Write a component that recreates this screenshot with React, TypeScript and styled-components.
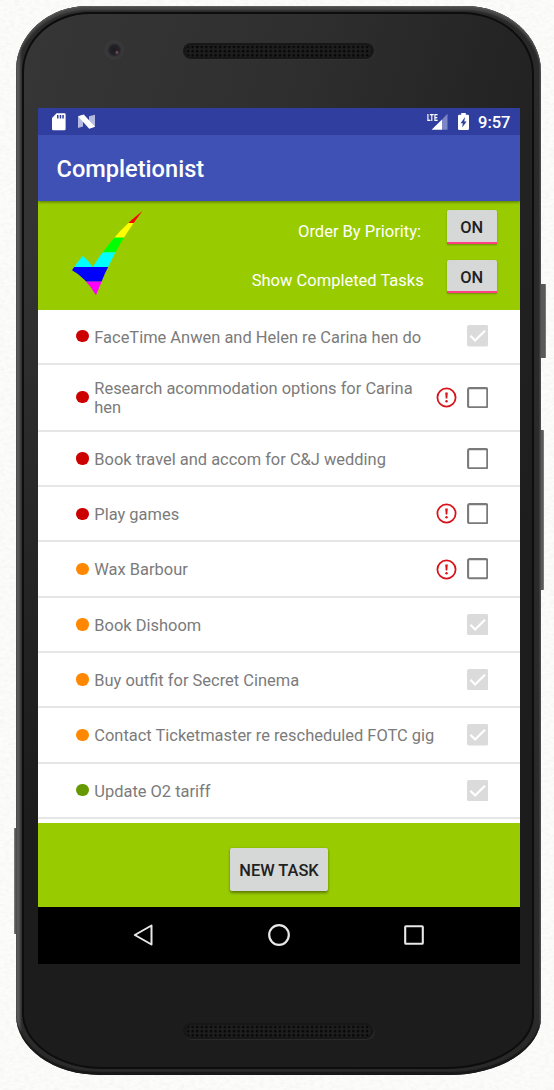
import React from 'react';
import styled, { createGlobalStyle } from 'styled-components';

const GlobalStyle = createGlobalStyle`
  * { box-sizing: border-box; }
  html, body { margin: 0; padding: 0; }
  body {
    background: #fcfcfb;
    font-family: Roboto, sans-serif;
    overflow: hidden;
  }
`;

const Desk = styled.div`
  position: relative;
  width: 554px;
  height: 1090px;
  padding: 6px 0 0 16px;
  overflow: hidden;
`;

const PaperGrain = styled.svg`
  position: absolute;
  inset: 0;
  width: 100%;
  height: 100%;
`;

const Phone = styled.div`
  position: relative;
  width: 525px;
  height: 1069px;
`;

const SideButton = styled.div<{ $side: 'left' | 'right'; $top: number; $height: number; $depth: number }>`
  position: absolute;
  ${(p) => p.$side}: ${(p) => -p.$depth}px;
  top: ${(p) => p.$top}px;
  width: 12px;
  height: ${(p) => p.$height}px;
  border-radius: 1px;
  background: #59585a;
  border-${(p) => p.$side}: 1px solid #777678;
`;

const Shell = styled.div`
  position: relative;
  height: 100%;
  padding: 6px 7px 6px 6px;
  border-radius: 72px 76px 92px 84px / 64px 66px 58px 60px;
  background: linear-gradient(90deg, #48494a 0, #5e5f60 1px, #515253 3px, #2b2b2b 6px, #292929 519px, #2d2c2d 523px, #5f5c5f 525px);
  box-shadow: inset 0 1px 1px #5c5c5c, inset 0 4px 2px #484848, inset 0 -3px 1px #181818;
`;

const Face = styled.div`
  height: 100%;
  display: flex;
  flex-direction: column;
  align-items: flex-start;
  padding: 0 12px 0 14px;
  border: 2px solid #0d0d0d;
  border-radius: 68px 72px 88px 80px / 60px 62px 54px 56px;
  background:
    linear-gradient(180deg, transparent 0, transparent 200px, #1c1c1d 800px),
    linear-gradient(105deg, #363637 0, #2f2f30 35%, #232323 65%, #1b1b1b 100%);
`;

const Bezel = styled.div<{ $height: number; $offset: number }>`
  width: 482px;
  height: ${(p) => p.$height}px;
  flex: none;
  display: flex;
  align-items: flex-start;
  padding-top: ${(p) => p.$offset}px;
`;

const Camera = styled.div`
  width: 20px;
  height: 20px;
  margin: -3px 0 0 66px;
  border-radius: 50%;
  background: radial-gradient(circle at 13px 12.5px, #8a625c 0, #39303a 1.6px, transparent 2.6px),
    radial-gradient(circle at 10.5px 10px, #1c1b20 0, #242228 5px, #343335 6.5px, #3a3a3b 9px, #373738 10px);
`;

const Speaker = styled.div<{ $left: number }>`
  width: 191px;
  height: 16px;
  margin-left: ${(p) => p.$left}px;
  padding: 2px 3px;
  border-radius: 8px;
  background: #171717;
  box-shadow: 0.5px 0.5px 0 #393939;
`;

const Mesh = styled.div`
  height: 12px;
  border-radius: 6px;
  background: radial-gradient(circle at 2px 2px, #050505 0, #080808 0.9px, #1e1e1e 1.7px) 0 0 / 4.6px 4.2px;
`;

const Screen = styled.div`
  width: 482px;
  height: 856px;
  flex: none;
  display: flex;
  flex-direction: column;
  background: #fff;
`;

const StatusBar = styled.div`
  height: 27px;
  flex: none;
  display: flex;
  align-items: center;
  padding: 0 10px 0 13px;
  background: #303f9f;
`;

const StatusGlyph = styled.svg<{ $gap: number }>`
  flex: none;
  margin-right: ${(p) => p.$gap}px;
`;

const Spacer = styled.div`
  flex: 1;
`;

const LteBadge = styled.span`
  width: 11px;
  height: 18px;
  margin-right: -8px;
  color: #fff;
  font-size: 9.6px;
  font-weight: 800;
  line-height: 9px;
  transform: scaleX(0.68);
  transform-origin: left;
  z-index: 1;
`;

const Clock = styled.span`
  width: 32px;
  color: #fff;
  font-size: 16.5px;
  font-weight: 500;
  line-height: 27px;
  padding-top: 1px;
  white-space: nowrap;
`;

const AppBar = styled.header`
  position: relative;
  height: 66px;
  flex: none;
  padding-left: 18.5px;
  background: #3f51b5;
  box-shadow: 0 1px 3px rgba(0, 0, 0, 0.45);
  clip-path: inset(0 0 -6px 0);
`;

const Title = styled.h1`
  margin: 0;
  padding-top: 1px;
  color: #fff;
  font-size: 23.6px;
  font-weight: 500;
  line-height: 66px;
`;

const Filters = styled.section`
  height: 108.5px;
  flex: none;
  display: flex;
  justify-content: space-between;
  padding: 9px 23.5px 0 30px;
  background: #99cc00;
`;

const Logo = styled.svg`
  margin: -5px 0 0 -8px;
`;

const Controls = styled.div`
  display: flex;
  flex-direction: column;
  gap: 16.3px;
`;

const Control = styled.div<{ $gap: number }>`
  height: 33.6px;
  display: flex;
  justify-content: flex-end;
  gap: ${(p) => p.$gap}px;
`;

const ControlLabel = styled.span<{ $drop: number }>`
  padding-top: ${(p) => p.$drop}px;
  color: #fff;
  font-size: 16.5px;
  line-height: 20px;
  white-space: nowrap;
`;

const Toggle = styled.button`
  width: 49.5px;
  height: 33.6px;
  padding: 2px 0 0;
  border: 0;
  border-bottom: 2px solid #ff4081;
  border-radius: 2px 2px 0 0;
  background: #d6d7d7;
  box-shadow: 0 1px 2px rgba(0, 0, 0, 0.3);
  color: #212121;
  font: 500 16.4px/32px Roboto, sans-serif;
`;

const TaskList = styled.ul`
  height: 513.5px;
  flex: none;
  margin: 0;
  padding: 0;
  overflow: hidden;
  list-style: none;
`;

const TaskRow = styled.li<{ $tall?: boolean }>`
  height: ${(p) => (p.$tall ? 67 : 55.3)}px;
  display: flex;
  align-items: center;
  padding: 0 31.8px 0 38.3px;
  border-bottom: 2px solid #e6e6e6;
`;

const Dot = styled.span<{ $color: string }>`
  width: 12.4px;
  height: 12.4px;
  flex: none;
  border-radius: 50%;
  background: ${(p) => p.$color};
`;

const TaskName = styled.span`
  flex: 1;
  padding: 2px 0 0 5.6px;
  color: #7b7b7b;
  font-size: 16.45px;
  line-height: 19.3px;
`;

const RowIcon = styled.svg<{ $gap?: number }>`
  flex: none;
  margin-right: ${(p) => p.$gap ?? 0}px;
`;

const Footer = styled.footer`
  height: 84px;
  flex: none;
  display: flex;
  justify-content: center;
  align-items: flex-start;
  padding-top: 25px;
  background: #99cc00;
`;

const NewTask = styled.button`
  width: 98.6px;
  height: 43px;
  padding: 1px 0 0;
  border: 0;
  border-radius: 2px;
  background: #d6d7d7;
  box-shadow: 0 1.5px 3px rgba(0, 0, 0, 0.4);
  color: #212121;
  font: 500 16.4px/44px Roboto, sans-serif;
  white-space: nowrap;
`;

const NavBar = styled.nav`
  height: 57px;
  flex: none;
  display: flex;
  align-items: center;
  gap: 111.5px;
  padding: 0 0 2px 93px;
  background: #000;
`;

type Task = { name: string; color: string; done?: boolean; overdue?: boolean; tall?: boolean };

const RED = '#cc0000';
const ORANGE = '#ff8800';
const GREEN = '#669900';

const tasks: Task[] = [
  { name: 'FaceTime Anwen and Helen re Carina hen do', color: RED, done: true },
  { name: 'Research acommodation options for Carina hen', color: RED, overdue: true, tall: true },
  { name: 'Book travel and accom for C&J wedding', color: RED },
  { name: 'Play games', color: RED, overdue: true },
  { name: 'Wax Barbour', color: ORANGE, overdue: true },
  { name: 'Book Dishoom', color: ORANGE, done: true },
  { name: 'Buy outfit for Secret Cinema', color: ORANGE, done: true },
  { name: 'Contact Ticketmaster re rescheduled FOTC gig', color: ORANGE, done: true },
  { name: 'Update O2 tariff', color: GREEN, done: true },
];

const Alert = () => (
  <RowIcon $gap={9.7} width="21" height="21" viewBox="0 0 21 21">
    <circle cx="10.5" cy="10.5" r="9.1" fill="none" stroke="#d8141b" strokeWidth="1.8" />
    <path d="M9.2 5.4h2.6l-.5 6.2H9.7z" fill="#d8141b" />
    <circle cx="10.5" cy="14.3" r="1.2" fill="#d8141b" />
  </RowIcon>
);

const Checkbox = ({ checked }: { checked?: boolean }) => (
  <RowIcon width="21.4" height="21.4" viewBox="0 0 21.4 21.4">
    {checked ? (
      <>
        <rect width="21.4" height="21.4" rx="2.2" fill="#dbdbdb" />
        <path d="M3.4 10.8l4.7 4.7L18 5.8" fill="none" stroke="#fff" strokeWidth="2.3" />
      </>
    ) : (
      <rect x="1.1" y="1.1" width="19.2" height="19.2" rx="1.4" fill="none" stroke="#7a7a7a" strokeWidth="2.1" />
    )}
  </RowIcon>
);

const RainbowCheck = () => (
  <Logo width="90" height="100" viewBox="0 0 270 300">
    <defs>
      <clipPath id="tick">
        <path d="M248 17Q165 80 98 186Q86 166 68 153Q52 170 36 196Q75 216 108 271Q160 130 248 17z" />
      </clipPath>
    </defs>
    <g clipPath="url(#tick)">
      <rect y="0" width="270" height="54" fill="#ff0000" />
      <rect y="54" width="270" height="44" fill="#ffff00" />
      <rect y="98" width="270" height="44" fill="#00ff00" />
      <rect y="142" width="270" height="44" fill="#00ffff" />
      <rect y="186" width="270" height="44" fill="#0000ff" />
      <rect y="230" width="270" height="50" fill="#ff00ff" />
    </g>
  </Logo>
);

export default function App() {
  return (
    <>
      <GlobalStyle />
      <Desk>
        <PaperGrain>
          <filter id="grain">
            <feTurbulence type="fractalNoise" baseFrequency="0.2 0.35" numOctaves="3" seed="4" />
            <feColorMatrix values="0 0 0 0 0.78  0 0 0 0 0.78  0 0 0 0 0.75  0.6 0 0 0 -0.23" />
          </filter>
          <rect width="100%" height="100%" filter="url(#grain)" />
        </PaperGrain>
        <Phone>
          <SideButton $side="right" $top={278} $height={74} $depth={5} />
          <SideButton $side="right" $top={424} $height={160} $depth={3} />
          <SideButton $side="left" $top={822} $height={106} $depth={2} />
          <Shell>
            <Face>
              <Bezel $height={94} $offset={29}>
                <Camera />
                <Speaker $left={59}>
                  <Mesh />
                </Speaker>
              </Bezel>
              <Screen>
                <StatusBar>
                  <StatusGlyph $gap={11} width="15" height="18" viewBox="0 0 15 18">
                    <path d="M5.5.3H13.4q1.2 0 1.2 1.2v14.5q0 1.2-1.2 1.2H2.2Q1 17.200 1 16V5.100z" fill="#fff" />
                    <path d="M6 2h1.5v3.4H6zM8.7 2h1.5v3.4H8.7zM11.3 2h1.5v3.4h-1.5z" fill="#303f9f" />
                  </StatusGlyph>
                  <StatusGlyph $gap={0} width="19" height="16" viewBox="0 0 19 16">
                    <path d="M1 2.4l5-1.400V12.500L1 14zM12 2.200L18 .7v12l-6 1.700z" fill="#b4bae0" />
                    <path d="M1 2.200L6.800.4 18 12.800l-5.800 2z" fill="#fff" />
                  </StatusGlyph>
                  <Spacer />
                  <LteBadge>LTE</LteBadge>
                  <StatusGlyph $gap={9.5} width="18" height="17" viewBox="0 0 18 17">
                    <path d="M17.500.7v16H12V6.400z" fill="#7d86c7" />
                    <path d="M12 6.600v10.100H1.600z" fill="#fff" />
                  </StatusGlyph>
                  <StatusGlyph $gap={9.5} width="11" height="17" viewBox="0 0 11 17">
                    <path d="M3.200 0h4.600v1.700h2q1.200 0 1.200 1.200v12.900q0 1.200-1.200 1.200H1.200Q0 17 0 15.800V2.900q0-1.200 1.200-1.200h2z" fill="#fff" />
                    <path d="M7 4L2.600 10.200h2.200L4.200 14.600 8.600 8.400H6.300z" fill="#303f9f" />
                  </StatusGlyph>
                  <Clock>9:57</Clock>
                </StatusBar>
                <AppBar>
                  <Title>Completionist</Title>
                </AppBar>
                <Filters>
                  <RainbowCheck />
                  <Controls>
                    <Control $gap={26}>
                      <ControlLabel $drop={11.5}>Order By Priority:</ControlLabel>
                      <Toggle>ON</Toggle>
                    </Control>
                    <Control $gap={23.3}>
                      <ControlLabel $drop={11.2}>Show Completed Tasks</ControlLabel>
                      <Toggle>ON</Toggle>
                    </Control>
                  </Controls>
                </Filters>
                <TaskList>
                  {tasks.map((task) => (
                    <TaskRow key={task.name} $tall={task.tall}>
                      <Dot $color={task.color} />
                      <TaskName>{task.name}</TaskName>
                      {task.overdue && <Alert />}
                      <Checkbox checked={task.done} />
                    </TaskRow>
                  ))}
                </TaskList>
                <Footer>
                  <NewTask>NEW TASK</NewTask>
                </Footer>
                <NavBar>
                  <svg width="24" height="24" viewBox="0 0 24 24">
                    <path d="M20.5 2.5v19L3.8 12z" fill="none" stroke="#e8e8e8" strokeWidth="2" strokeLinejoin="round" />
                  </svg>
                  <svg width="24" height="24" viewBox="0 0 24 24">
                    <circle cx="12" cy="12" r="9.8" fill="none" stroke="#e8e8e8" strokeWidth="2.2" />
                  </svg>
                  <svg width="24" height="24" viewBox="0 0 24 24">
                    <rect x="3.2" y="3.2" width="17.6" height="17.6" rx="0.8" fill="none" stroke="#e8e8e8" strokeWidth="2.1" />
                  </svg>
                </NavBar>
              </Screen>
              <Bezel $height={90} $offset={59}>
                <Speaker $left={145}>
                  <Mesh />
                </Speaker>
              </Bezel>
            </Face>
          </Shell>
        </Phone>
      </Desk>
    </>
  );
}
